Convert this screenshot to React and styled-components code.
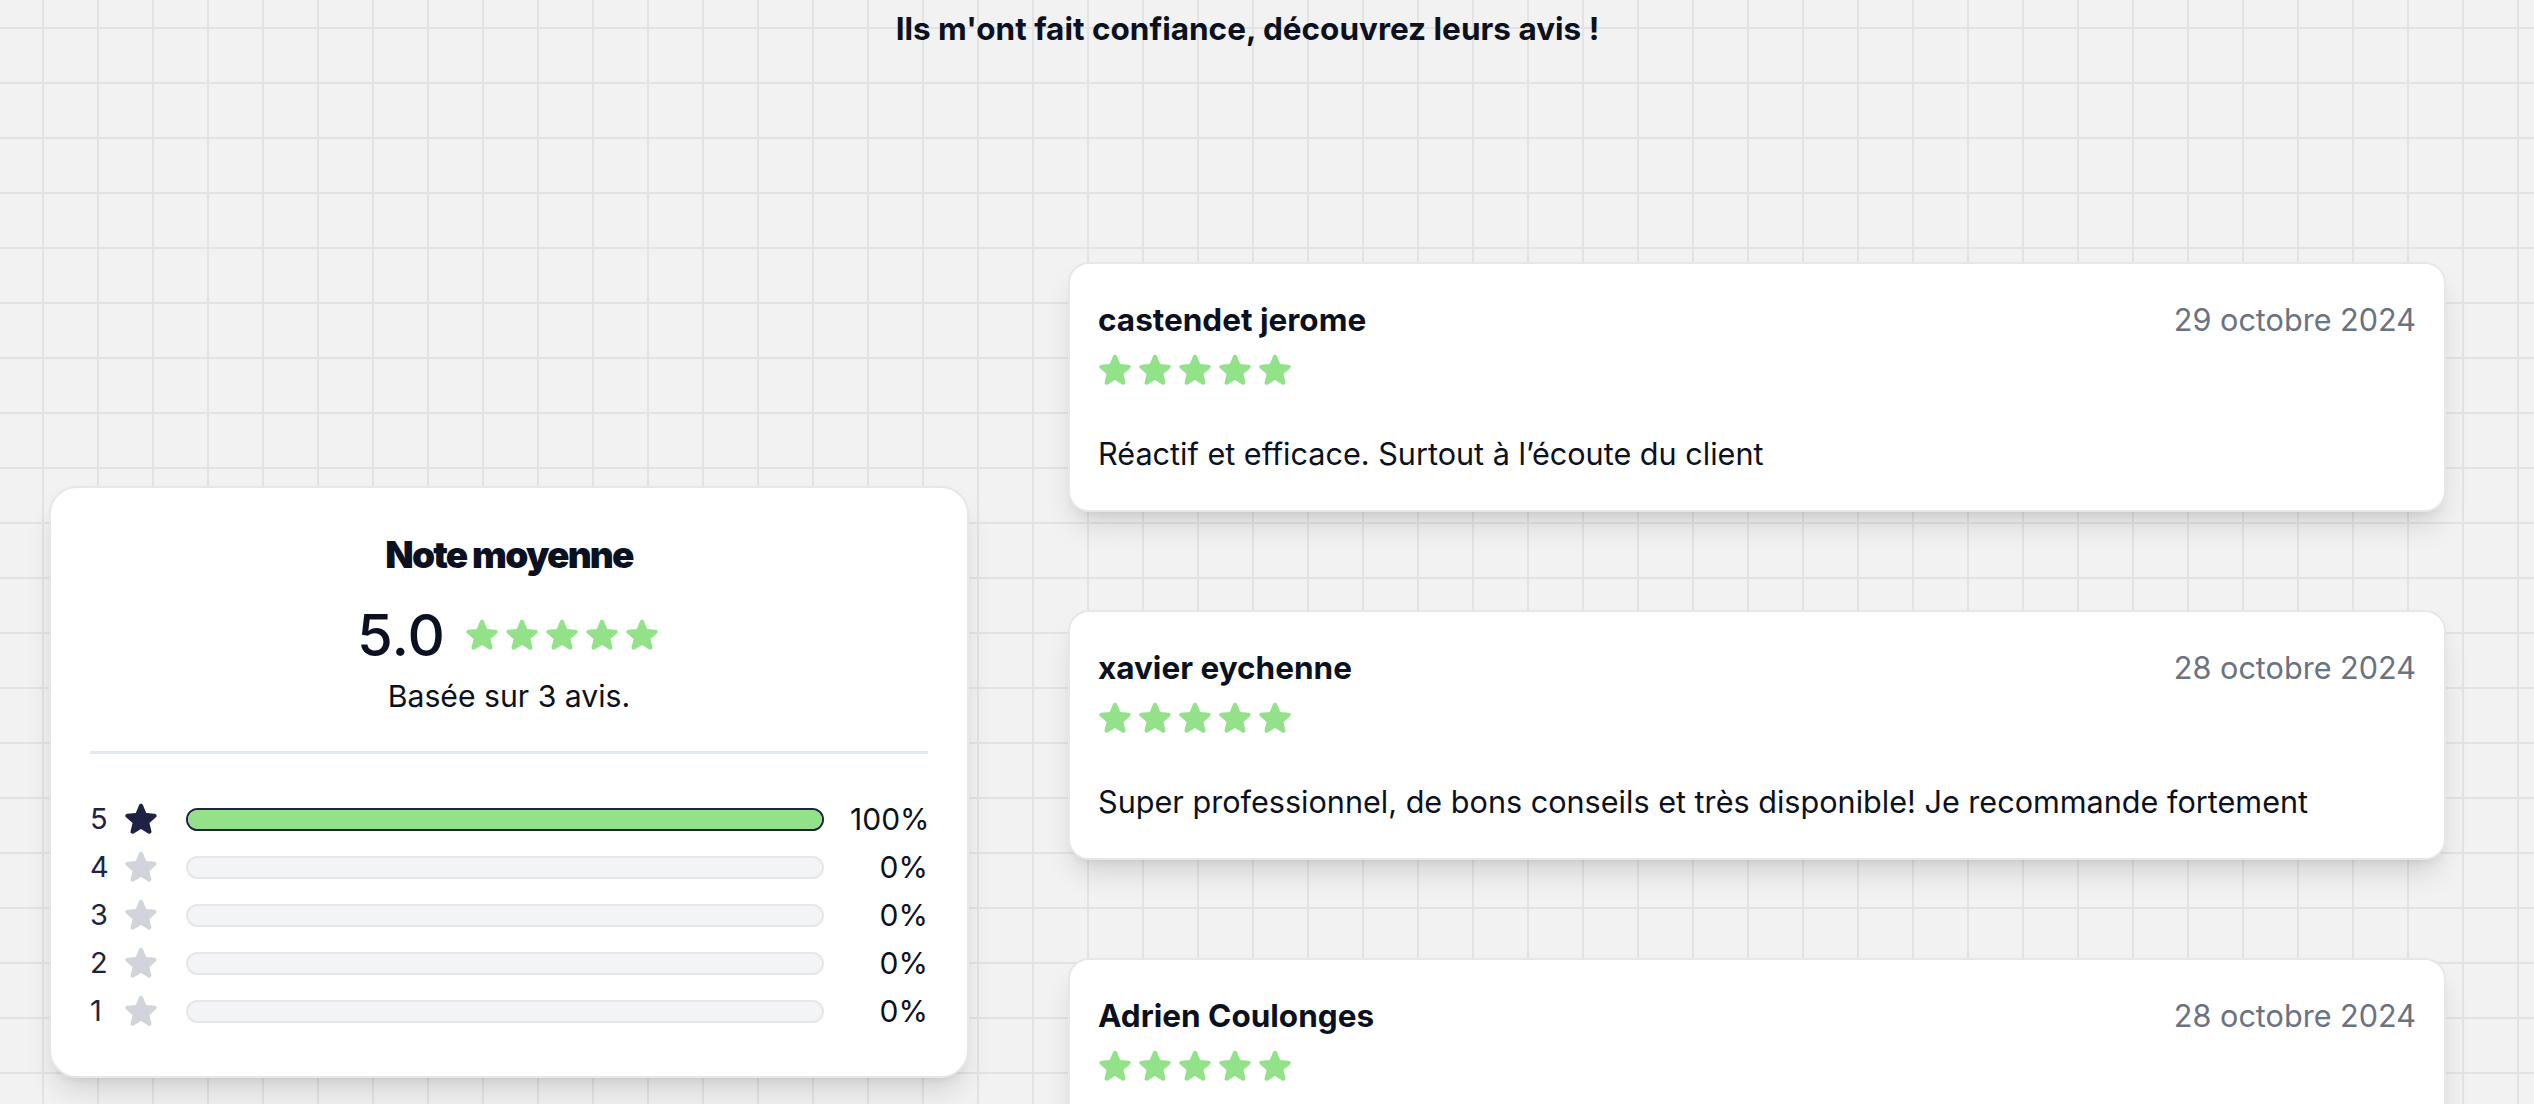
import React from "react";
import styled, { createGlobalStyle } from "styled-components";

const GlobalStyle = createGlobalStyle`
  html, body { margin: 0; padding: 0; }
  body {
    background-color: #f2f2f2;
    background-image:
      linear-gradient(to right, #e3e3e3 0, #e3e3e3 2px, transparent 2px),
      linear-gradient(to bottom, #e3e3e3 0, #e3e3e3 2px, transparent 2px);
    background-size: 55px 55px;
    background-position: 42px 27px;
    font-family: Inter, "Noto Sans", "Liberation Sans", sans-serif;
    color: #0f172a;
    overflow: hidden;
    min-height: 1104px;
  }
`;

const Page = styled.div`
  width: 2397px;
  margin-left: 49px;
  padding-top: 8px;
`;

const Heading = styled.h2`
  margin: 0;
  text-align: center;
  font-size: 31.5px;
  line-height: 42px;
  font-weight: 700;
  color: #0b1120;
`;

const Layout = styled.div`
  display: flex;
  align-items: flex-start;
  gap: 99px;
  margin-top: 212px;
`;

const SummaryColumn = styled.div`
  width: 920px;
  flex-shrink: 0;
  padding-top: 224px;
`;

const SummaryCard = styled.div`
  background: #ffffff;
  border: 2px solid #e5e7eb;
  border-radius: 28px;
  box-shadow: 0 18px 30px -6px rgba(0, 0, 0, 0.13), 0 7px 12px -7px rgba(0, 0, 0, 0.1);
  padding: 42px 39px 46px;
  display: flex;
  flex-direction: column;
  align-items: stretch;
`;

const SummaryTitle = styled.div`
  text-align: center;
  font-family: Inter, sans-serif;
  font-weight: 900;
  font-size: 37px;
  letter-spacing: -1.8px;
  line-height: 50px;
  color: #0b1120;
`;

const ScoreRow = styled.div`
  display: flex;
  align-items: center;
  justify-content: center;
  gap: 18px;
  margin-top: 24px;
  height: 62px;
`;

const Score = styled.span`
  font-size: 58px;
  font-weight: 500;
  line-height: 62px;
  color: #0b1120;
`;

const Stars = styled.div`
  display: flex;
  align-items: center;
  gap: 2px;
`;

const StarSvg = styled.svg`
  width: 38px;
  height: 38px;
  display: block;
  flex-shrink: 0;
  fill: ${(p) => p.$color};
`;

const BasedOn = styled.div`
  text-align: center;
  font-size: 30.2px;
  line-height: 42px;
  margin-top: 9px;
  color: #0b1120;
`;

const Divider = styled.hr`
  border: 0;
  height: 3px;
  background: #e2e8f0;
  margin: 34px 0 46px;
`;

const Distribution = styled.div`
  display: flex;
  flex-direction: column;
  gap: 10px;
`;

const DistRow = styled.div`
  display: flex;
  align-items: center;
  height: 38px;
`;

const DistNum = styled.span`
  width: 18px;
  font-size: 29px;
  line-height: 38px;
  color: #1e2340;
  margin-right: 14px;
`;

const Bar = styled.div`
  flex: 1;
  height: 23px;
  box-sizing: border-box;
  margin-left: 26px;
  border-radius: 999px;
  border: 2px solid ${(p) => (p.$full ? "#1e2442" : "#e5e7eb")};
  background: #f3f4f6;
  overflow: hidden;
`;

const BarFill = styled.div`
  height: 100%;
  background: #93e28a;
  border-radius: 999px;
`;

const Percent = styled.span`
  width: 78px;
  margin-left: 26px;
  text-align: right;
  font-size: 30px;
  line-height: 38px;
  color: #0b1120;
`;

const ReviewsColumn = styled.div`
  flex: 1;
  display: flex;
  flex-direction: column;
  gap: 98px;
`;

const ReviewCard = styled.div`
  background: #ffffff;
  border: 2px solid #e5e7eb;
  border-radius: 21px;
  box-shadow: 0 18px 30px -6px rgba(0, 0, 0, 0.13), 0 7px 12px -7px rgba(0, 0, 0, 0.1);
  padding: 35px 28px;
`;

const ReviewHeader = styled.div`
  display: flex;
  justify-content: space-between;
  align-items: center;
`;

const Author = styled.span`
  font-size: 31.5px;
  font-weight: 700;
  line-height: 42px;
  color: #0b1120;
`;

const DateText = styled.span`
  font-size: 30.6px;
  line-height: 42px;
  color: #6b7280;
`;

const ReviewStars = styled(Stars)`
  margin-top: 10px;
  margin-left: -2px;
`;

const ReviewText = styled.p`
  margin: 44px 0 0;
  font-size: 30.6px;
  line-height: 42px;
  color: #0b1120;
`;

const STAR_PATH =
  "M10.788 3.21c.448-1.077 1.976-1.077 2.424 0l2.082 5.006 5.404.434c1.164.093 1.636 1.545.749 2.305l-4.117 3.527 1.257 5.273c.271 1.136-.964 2.033-1.96 1.425L12 18.354 7.373 21.18c-.996.608-2.231-.29-1.96-1.425l1.257-5.273-4.117-3.527c-.887-.76-.415-2.212.749-2.305l5.404-.434 2.082-5.005Z";

function Star({ color = "#93e28a" }) {
  return (
    <StarSvg viewBox="0 0 24 24" $color={color} aria-hidden="true">
      <path d={STAR_PATH} />
    </StarSvg>
  );
}

function FiveStars({ as: Wrapper = Stars }) {
  return (
    <Wrapper>
      {[0, 1, 2, 3, 4].map((i) => (
        <Star key={i} />
      ))}
    </Wrapper>
  );
}

const distribution = [
  { n: 5, pct: 100 },
  { n: 4, pct: 0 },
  { n: 3, pct: 0 },
  { n: 2, pct: 0 },
  { n: 1, pct: 0 },
];

const reviews = [
  {
    author: "castendet jerome",
    date: "29 octobre 2024",
    text: "Réactif et efficace. Surtout à l’écoute du client",
  },
  {
    author: "xavier eychenne",
    date: "28 octobre 2024",
    text: "Super professionnel, de bons conseils et très disponible! Je recommande fortement",
  },
  {
    author: "Adrien Coulonges",
    date: "28 octobre 2024",
    text: "Très bon accompagnement, je recommande.",
  },
];

export default function App() {
  return (
    <>
      <GlobalStyle />
      <Page>
        <Heading>Ils m'ont fait confiance, découvrez leurs avis !</Heading>
        <Layout>
          <SummaryColumn>
            <SummaryCard>
              <SummaryTitle>Note moyenne</SummaryTitle>
              <ScoreRow>
                <Score>5.0</Score>
                <FiveStars />
              </ScoreRow>
              <BasedOn>Basée sur 3 avis.</BasedOn>
              <Divider />
              <Distribution>
                {distribution.map((d) => (
                  <DistRow key={d.n}>
                    <DistNum>{d.n}</DistNum>
                    <Star color={d.pct > 0 ? "#1e2245" : "#d1d5db"} />
                    <Bar $full={d.pct > 0}>
                      {d.pct > 0 && <BarFill style={{ width: `${d.pct}%` }} />}
                    </Bar>
                    <Percent>{d.pct}%</Percent>
                  </DistRow>
                ))}
              </Distribution>
            </SummaryCard>
          </SummaryColumn>
          <ReviewsColumn>
            {reviews.map((r) => (
              <ReviewCard key={r.author}>
                <ReviewHeader>
                  <Author>{r.author}</Author>
                  <DateText>{r.date}</DateText>
                </ReviewHeader>
                <FiveStars as={ReviewStars} />
                <ReviewText>{r.text}</ReviewText>
              </ReviewCard>
            ))}
          </ReviewsColumn>
        </Layout>
      </Page>
    </>
  );
}
